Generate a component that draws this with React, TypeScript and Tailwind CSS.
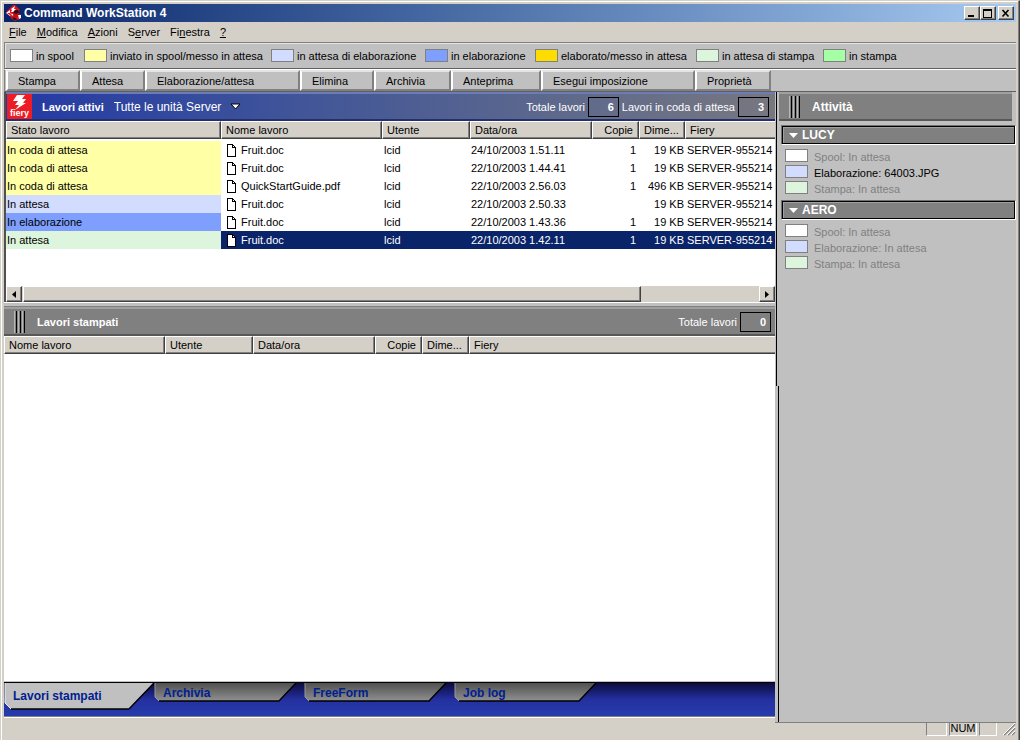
import { ReactNode } from "react";
import clsx from "clsx";

const legend = [
  { label: "in spool", color: "bg-white", width: "w-[74px]" },
  { label: "inviato in spool/messo in attesa", color: "bg-[#ffffa5]", width: "w-[187px]" },
  { label: "in attesa di elaborazione", color: "bg-[#d2dcff]", width: "w-[154px]" },
  { label: "in elaborazione", color: "bg-[#7f9fff]", width: "w-[110px]" },
  { label: "elaborato/messo in attesa", color: "bg-[#ffdc00]", width: "w-[161px]" },
  { label: "in attesa di stampa", color: "bg-[#dcf5dc]", width: "w-[127px]" },
  { label: "in stampa", color: "bg-[#a5ffa5]", width: "w-[90px]" },
];

const actions = [
  { label: "Stampa", width: "w-[74px]" },
  { label: "Attesa", width: "w-[65px]" },
  { label: "Elaborazione/attesa", width: "w-[155px]" },
  { label: "Elimina", width: "w-[74px]" },
  { label: "Archivia", width: "w-[77px]" },
  { label: "Anteprima", width: "w-[90px]" },
  { label: "Esegui imposizione", width: "w-[154px]" },
  { label: "Proprietà", width: "w-[76px]" },
];

const yellow = "bg-[#ffffa5]";

const jobs = [
  { status: "In coda di attesa", color: yellow, name: "Fruit.doc", date: "24/10/2003 1.51.11", copies: "1", size: "19 KB" },
  { status: "In coda di attesa", color: yellow, name: "Fruit.doc", date: "22/10/2003 1.44.41", copies: "1", size: "19 KB" },
  { status: "In coda di attesa", color: yellow, name: "QuickStartGuide.pdf", date: "22/10/2003 2.56.03", copies: "1", size: "496 KB" },
  { status: "In attesa", color: "bg-[#d2dcff]", name: "Fruit.doc", date: "22/10/2003 2.50.33", copies: "", size: "19 KB" },
  { status: "In elaborazione", color: "bg-[#7f9fff]", name: "Fruit.doc", date: "22/10/2003 1.43.36", copies: "1", size: "19 KB" },
  { status: "In attesa", color: "bg-[#dcf5dc]", name: "Fruit.doc", date: "22/10/2003 1.42.11", copies: "1", size: "19 KB", selected: true },
];

const raised = "border border-t-white border-l-white border-r-[#404040] border-b-[#404040] bg-[#d4d0c8] shadow-[inset_-1px_-1px_0_#808080]";

function AppIcon() {
  return <svg width="16" height="16" viewBox="0 0 16 16" aria-hidden="true">
    <path d="M7 0h2l5 5-2 2 3 3-1 4-3 1-2 1-4-3-1-2-4-3 1-2Z" fill="#e01020"/>
    <path d="M5 4 9 1 8 4h2L7 7H5l1-2Z" fill="#fff"/>
    <path d="M0 8 4 5v3l2 1-2 2Z" fill="#fff"/>
    <path d="M1 8h3l2 2-1 1Z" fill="#e01020"/>
    <path d="M9 5h3l1 3-3 1-3-1ZM6 12l4 1 1 2H8ZM12 9l1 5 1-4Z" fill="#301010"/>
    <path d="M12 10h3v3l-2 1ZM5 9h3l-1 2Z" fill="#fff"/>
    <path d="M7 9h4l1 3-4 1Z" fill="#c00c18"/>
  </svg>;
}

function FieryLogo() {
  return <svg width="25" height="25" viewBox="0 0 25 25" role="img" aria-label="fiery">
    <path d="M0 0h25v25H0z" fill="#ee1c25"/>
    <path d="M10 1h8l-3 4h4l-3 4h3L8 16l4-5H8l3-4H6Z" fill="#fff"/>
    <text x="12.5" y="22" textAnchor="middle" fill="#fff" fontSize="9" fontWeight="bold" fontFamily="Liberation Sans, sans-serif">fiery</text>
  </svg>;
}

function FileIcon() {
  return <svg width="9" height="13" viewBox="0 0 9 13" shapeRendering="crispEdges" aria-hidden="true">
    <path d="M.5.5h5l3 3v9h-8Z" fill="#fff" stroke="#000"/>
    <path d="M5.500.5v3h3" fill="none" stroke="#000"/>
  </svg>;
}

function TitleBar() {
  const button = clsx(raised, "flex h-[14px] w-4 items-center justify-center");
  return <header className="flex h-[18px] items-center bg-linear-to-r from-[#0a246a] to-[#a6caf0] px-0.5">
    <AppIcon/>
    <h1 className="ml-0.5 grow text-[12px] font-bold text-white">Command WorkStation 4</h1>
    <button className={button} aria-label="Riduci a icona">
      <svg width="10" height="9" shapeRendering="crispEdges"><path d="M1 6h6v2H1z"/></svg>
    </button>
    <button className={button} aria-label="Ingrandisci">
      <svg width="10" height="9" shapeRendering="crispEdges"><path d="M0 0h9v9H0zM1 2v6h7V2z" fillRule="evenodd"/></svg>
    </button>
    <button className={clsx(button, "ml-0.5")} aria-label="Chiudi">
      <svg width="10" height="9" stroke="#000" strokeWidth="1.6"><path d="m1.500 1 6 6.500m0-6.500-6 6.500"/></svg>
    </button>
  </header>;
}

function MenuBar() {
  return <nav className="flex h-5 items-center gap-2.5 pl-[5px]">
    <button><u>F</u>ile</button>
    <button><u>M</u>odifica</button>
    <button><u>A</u>zioni</button>
    <button>S<u>e</u>rver</button>
    <button>Fi<u>n</u>estra</button>
    <button><u>?</u></button>
  </nav>;
}

function Swatch({ color }: { color: string }) {
  return <span className={clsx("h-[13px] w-[23px] shrink-0 border border-[#808080]", color)}/>;
}

function Legend() {
  return <ul className="flex h-[27px] items-center border-t border-b border-l border-t-[#808080] border-l-[#808080] border-b-[#606060] bg-[#c0c0c0] pl-[5px] shadow-[inset_1px_1px_0_#e4e4e4]">
    {legend.map(({ label, color, width }) =>
      <li key={label} className={clsx("flex items-center gap-[3px]", width)}>
        <Swatch color={color}/>
        {label}
      </li>
    )}
  </ul>;
}

function Toolbar() {
  return <div role="toolbar" className="flex h-[23px] border-t border-b border-l border-t-white border-l-[#808080] border-b-[#606060] bg-[#c0c0c0] pl-px">
    {actions.map(({ label, width }) =>
      <button key={label} className={clsx("h-[21px] border-2 border-t-[#e4e4e4] border-l-white border-r-[#808080] border-b-[#808080] pl-2.5 text-left", width)}>
        {label}
      </button>
    )}
  </div>;
}

function Grip() {
  return <div className="flex gap-px">
    {[0, 1, 2].map((i) => <span key={i} className="h-[22px] w-[3px] border-x border-l-[#b8b8b8] border-r-black"/>)}
  </div>;
}

function Counter({ label, value }: { label: string; value: number }) {
  return <div className="flex items-center gap-[3px]">
    {label}
    <output className="h-5 w-[31px] border border-black pr-1 text-right font-bold leading-[18px]">{value}</output>
  </div>;
}

function HeaderCell({ children, right }: { children: ReactNode; right?: boolean }) {
  return <th className={clsx(raised, "h-[18px] font-normal last:border-r-0 last:shadow-[inset_0_-1px_0_#808080]", right ? "pr-[5px] text-right" : "pl-1 text-left")}>{children}</th>;
}

function ScrollBar() {
  return <div className="flex h-4 bg-[#d4d0c8]">
    <button className={clsx(raised, "flex w-4 items-center justify-center")} aria-label="Scorri a sinistra">
      <svg width="4" height="7"><path d="M4 0v7L0 3.500z"/></svg>
    </button>
    <div className="grow pl-px"><div className={clsx(raised, "h-full w-[84%]")}/></div>
    <button className={clsx(raised, "flex w-4 items-center justify-center")} aria-label="Scorri a destra">
      <svg width="4" height="7"><path d="M0 0v7l4-3.500z"/></svg>
    </button>
  </div>;
}

function ActiveJobs() {
  return <section className="border-l-2 border-[#505050] bg-white">
    <div className="flex h-[29px] items-center border-t-2 border-b-2 border-t-[#6c7cb4] border-b-[#24306c] bg-linear-to-r from-[#2438a4] to-[#77777f] pl-px pr-1.5 text-white">
      <FieryLogo/>
      <h2 className="ml-2.5 font-bold">Lavori attivi</h2>
      <div className="ml-2.5 flex items-center gap-2 text-[12px]">
        <select aria-label="Unità" className="appearance-none">
          <option>Tutte le unità Server</option>
        </select>
        <svg width="11" height="7" aria-hidden="true"><path d="M1 1h9L5.500 6z" fill="#fff" stroke="#000"/></svg>
      </div>
      <div className="ml-auto flex gap-[3px]">
        <Counter label="Totale lavori" value={6}/>
        <Counter label="Lavori in coda di attesa" value={3}/>
      </div>
    </div>
    <table className="w-full table-fixed border-separate border-spacing-0">
      <colgroup>
        <col className="w-[215px]"/>
        <col className="w-[161px]"/>
        <col className="w-[88px]"/>
        <col className="w-[122px]"/>
        <col className="w-[47px]"/>
        <col className="w-[46px]"/>
        <col/>
      </colgroup>
      <thead>
        <tr>
          <HeaderCell>Stato lavoro</HeaderCell>
          <HeaderCell>Nome lavoro</HeaderCell>
          <HeaderCell>Utente</HeaderCell>
          <HeaderCell>Data/ora</HeaderCell>
          <HeaderCell right>Copie</HeaderCell>
          <HeaderCell>Dime...</HeaderCell>
          <HeaderCell>Fiery</HeaderCell>
        </tr>
      </thead>
      <tbody>
        <tr className="h-0.5" aria-hidden="true"/>
        {jobs.map((job, i) =>
          <tr key={i} className={clsx("h-[18px]", job.selected && "bg-[#0a246a] text-white")}>
            <td className={clsx("pl-px text-black", job.color)}>{job.status}</td>
            <td><span className="flex items-center gap-[5px] pl-1.5"><FileIcon/>{job.name}</span></td>
            <td className="pl-0.5">lcid</td>
            <td className="pl-px">{job.date}</td>
            <td className="pr-[3px] text-right">{job.copies}</td>
            <td className="whitespace-nowrap pr-px text-right">{job.size}</td>
            <td className="pl-0.5">SERVER-955214</td>
          </tr>
        )}
      </tbody>
    </table>
    <div className="h-[37px]"/>
    <ScrollBar/>
  </section>;
}

function PrintedJobs() {
  return <section className="flex grow flex-col border-b border-[#c0c0c0] bg-white">
    <div className="flex h-[29px] items-center border-t-2 border-b-2 border-t-[#a0a0a0] border-b-[#585858] bg-[#808080] pl-2.5 pr-1 text-white">
      <Grip/>
      <h2 className="ml-3 grow font-bold">Lavori stampati</h2>
      <Counter label="Totale lavori" value={0}/>
    </div>
    <table className="w-full table-fixed border-separate border-spacing-0">
      <colgroup>
        <col className="w-[161px]"/>
        <col className="w-[88px]"/>
        <col className="w-[122px]"/>
        <col className="w-[47px]"/>
        <col className="w-[47px]"/>
        <col/>
      </colgroup>
      <thead>
        <tr>
          <HeaderCell>Nome lavoro</HeaderCell>
          <HeaderCell>Utente</HeaderCell>
          <HeaderCell>Data/ora</HeaderCell>
          <HeaderCell right>Copie</HeaderCell>
          <HeaderCell>Dime...</HeaderCell>
          <HeaderCell>Fiery</HeaderCell>
        </tr>
      </thead>
    </table>
  </section>;
}

function Tab({ label, active }: { label: string; active?: boolean }) {
  return <button role="tab" aria-selected={!!active} className={clsx("relative w-[150px] pl-[9px] text-left text-[12px] font-bold text-[#002090]", active ? "h-[26px]" : "h-[19px]")}>
    {active
      ? <svg className="absolute top-0 left-0" width="151" height="28" aria-hidden="true">
          <path d="M1 0h149l-25 26H7l-6-6Z" fill="#c0c0c0"/>
          <path d="M150 0 125 26H7" fill="none" stroke="#000" strokeWidth="1.500"/>
          <path d="M1 0v20l6 6" fill="none" stroke="#eee"/>
        </svg>
      : <svg className="absolute top-0 left-0" width="151" height="20" aria-hidden="true">
          <defs>
            <linearGradient id="tab" x2="0" y2="1"><stop stopColor="#505050"/><stop offset="1" stopColor="#909090"/></linearGradient>
          </defs>
          <path d="M1 0h141l-17 18H5l-4-4Z" fill="url(#tab)"/>
          <path d="M142 0 125 18H5" fill="none" stroke="#000" strokeWidth="1.500"/>
          <path d="M1 0v14l4 4" fill="none" stroke="#999"/>
        </svg>}
    <span className="relative">{label}</span>
  </button>;
}

function Tabs() {
  return <div role="tablist" className="flex h-[35px] items-start border-t border-b border-t-black border-b-[#808080] bg-linear-to-b from-[#0c0c40] via-[#2430a0] to-[#263cac]">
    <Tab label="Lavori stampati" active/>
    <Tab label="Archivia"/>
    <Tab label="FreeForm"/>
    <Tab label="Job log"/>
  </div>;
}

function Server({ name, rows }: { name: string; rows: { label: string; value: string; color: string; busy?: boolean }[] }) {
  return <section className="mb-[3px]">
    <h3 className="border border-t-[#707070] border-l-[#707070] border-r-white border-b-white">
      <button className="flex h-[18px] w-full items-center gap-1 border border-black bg-[#808080] pl-1.5 text-[12px] font-bold text-white shadow-[inset_1px_1px_0_#a0a0a0]">
        <svg width="9" height="5" aria-hidden="true"><path d="M0 0h9L4.500 5z" fill="#fff"/></svg>
        {name}
      </button>
    </h3>
    <ul className="pt-1 pl-1">
      {rows.map(({ label, value, color, busy }) =>
        <li key={label} className={clsx("flex h-4 gap-1.5 leading-4", busy ? "text-black" : "text-[#808080]")}>
          <Swatch color={color}/>
          {label}: {value}
        </li>
      )}
    </ul>
  </section>;
}

function Activity() {
  return <aside className="flex w-[241px] shrink-0 border-b border-[#808080] bg-[#c0c0c0]">
    <div className="flex w-1 flex-col pl-px">
      <div className="h-[294px] w-px bg-black"/>
      <div className="ml-0.5 w-px grow bg-black"/>
    </div>
    <div className="grow">
      <div className="mr-1 flex h-[29px] items-center border-t-2 border-b-2 border-t-[#a0a0a0] border-b-[#585858] bg-[#808080] pl-2.5 text-white">
        <Grip/>
        <h2 className="ml-3 text-[12px] font-bold">Attività</h2>
      </div>
      <div className="pt-1 pl-0.5">
        <Server name="LUCY" rows={[
          { label: "Spool", value: "In attesa", color: "bg-white" },
          { label: "Elaborazione", value: "64003.JPG", color: "bg-[#d2dcff]", busy: true },
          { label: "Stampa", value: "In attesa", color: "bg-[#dcf5dc]" },
        ]}/>
        <Server name="AERO" rows={[
          { label: "Spool", value: "In attesa", color: "bg-white" },
          { label: "Elaborazione", value: "In attesa", color: "bg-[#d2dcff]" },
          { label: "Stampa", value: "In attesa", color: "bg-[#dcf5dc]" },
        ]}/>
      </div>
    </div>
  </aside>;
}

function StatusBar() {
  const pane = "h-[13px] border border-t-0 border-l-[#808080] border-r-white border-b-white";
  return <footer className="flex h-[17px] items-start justify-end gap-0.5">
    <span className={clsx(pane, "w-[21px]")}/>
    <span className={clsx(pane, "w-7 text-center leading-[11px]")}>NUM</span>
    <span className={clsx(pane, "w-[18px]")}/>
    <svg className="ml-1" width="13" height="13" aria-hidden="true">
      <path d="M1 12 12 1M5 12l7-7M9 12l3-3" stroke="#808080" strokeWidth="1.500"/>
      <path d="M0 12 12 0M4 12l8-8M8 12l4-4" stroke="#fff"/>
    </svg>
  </footer>;
}

function App() {
  return <div className="flex min-h-screen flex-col border-x border-t border-t-[#d4d0c8] border-l-[#d4d0c8] border-r-[#404040] bg-[#d4d0c8] px-[3px] pt-[3px] font-['Liberation_Sans',Arial,sans-serif] text-[11px] leading-[14px] text-black shadow-[inset_-1px_0_0_#808080,inset_1px_1px_0_#fff]">
    <TitleBar/>
    <MenuBar/>
    <Legend/>
    <Toolbar/>
    <main className="flex grow">
      <div className="flex min-w-0 grow flex-col">
        <ActiveJobs/>
        <div className="h-[5px] border-t border-b border-t-white border-b-[#808080] bg-[#c0c0c0]"/>
        <PrintedJobs/>
        <Tabs/>
        <div className="h-1.5 border-t border-white"/>
      </div>
      <Activity/>
    </main>
    <StatusBar/>
  </div>;
}

export default App;
